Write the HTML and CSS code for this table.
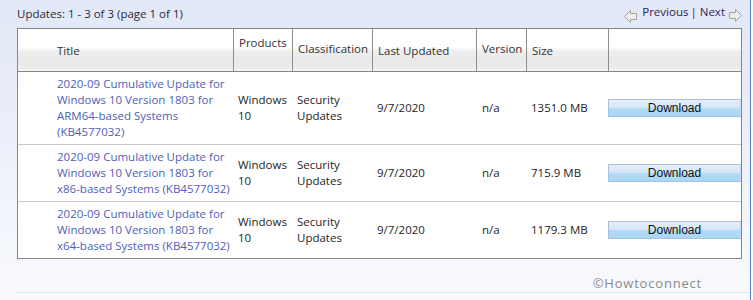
FILE: index.html
```html
<!DOCTYPE html>
<html lang="en">
<head>
    <meta charset="UTF-8">
    <meta name="viewport" content="width=device-width, initial-scale=1.0">
    <title>Microsoft Update Catalog - Search results</title>
    <link rel="stylesheet" href="styles.css">
</head>
<body>
    <div class="window">
        <div class="toolbar">
            <span class="count">Updates: 1 - 3 of 3 (page 1 of 1)</span>
            <div class="pager">
                <svg class="arrow" width="13" height="13" viewBox="0 0 13 13">
                    <polygon points="0.5,6.5 6.5,0.5 6.5,3.5 12.5,3.5 12.5,9.5 6.5,9.5 6.5,12.5" fill="#ececec" stroke="#a3a3a3"/>
                </svg>
                <a class="pager-link" href="#">Previous</a>
                <span class="sep">|</span>
                <a class="pager-link" href="#">Next</a>
                <svg class="arrow arrow-next" width="13" height="13" viewBox="0 0 13 13">
                    <polygon points="12.5,6.5 6.5,0.5 6.5,3.5 0.5,3.5 0.5,9.5 6.5,9.5 6.5,12.5" fill="#ececec" stroke="#a3a3a3"/>
                </svg>
            </div>
        </div>

        <table class="results">
            <thead>
                <tr>
                    <th class="col-title">Title</th>
                    <th class="col-products">Products</th>
                    <th class="col-class">Classification</th>
                    <th class="col-date">Last Updated</th>
                    <th class="col-version">Version</th>
                    <th class="col-size">Size</th>
                    <th class="col-action"></th>
                </tr>
            </thead>
            <tbody>
                <tr>
                    <td class="col-title"><a href="#">2020-09 Cumulative Update for Windows 10 Version 1803 for ARM64-based Systems (KB4577032)</a></td>
                    <td>Windows 10</td>
                    <td>Security Updates</td>
                    <td>9/7/2020</td>
                    <td class="col-version">n/a</td>
                    <td>1351.0 MB</td>
                    <td class="col-action"><button type="button">Download</button></td>
                </tr>
                <tr>
                    <td class="col-title"><a href="#">2020-09 Cumulative Update for Windows 10 Version 1803 for x86-based Systems (KB4577032)</a></td>
                    <td>Windows 10</td>
                    <td>Security Updates</td>
                    <td>9/7/2020</td>
                    <td class="col-version">n/a</td>
                    <td>715.9 MB</td>
                    <td class="col-action"><button type="button">Download</button></td>
                </tr>
                <tr>
                    <td class="col-title"><a href="#">2020-09 Cumulative Update for Windows 10 Version 1803 for x64-based Systems (KB4577032)</a></td>
                    <td>Windows 10</td>
                    <td>Security Updates</td>
                    <td>9/7/2020</td>
                    <td class="col-version">n/a</td>
                    <td>1179.3 MB</td>
                    <td class="col-action"><button type="button">Download</button></td>
                </tr>
            </tbody>
        </table>

        <div class="footer">
            <span class="watermark">©Howtoconnect</span>
        </div>
    </div>
</body>
</html>
```

FILE: styles.css
```css
/* Global Styles */
* {
    margin: 0;
    padding: 0;
    box-sizing: border-box;
}

body {
    font-family: 'Segoe UI', 'Open Sans', sans-serif;
    font-size: 11.5px;
    line-height: 16px;
    color: #1e1e1e;
    background: #fbfcfe;
    overflow: hidden;
}

/* Window frame */
.window {
    width: 751px;
    height: 300px;
    padding-left: 17px;
    border-right: 1px solid #5682c2;
    background: linear-gradient(to bottom, #e2e8f6 0, #eaeef9 120px, #f6f8fd 260px, #f7f9fd 100%);
}

/* Top bar */
.toolbar {
    width: 725px;
    height: 28px;
    display: flex;
    justify-content: space-between;
}

.count {
    padding-top: 6px;
    color: #2a2a3a;
}

.pager {
    display: flex;
    align-items: flex-start;
    padding-top: 4px;
}

.pager-link {
    color: #2f1f5e;
    text-decoration: none;
}

.sep {
    color: #2f1f5e;
    margin: 0 3px 0 2px;
}

.arrow {
    margin: 6px 5px 0 0;
}

.arrow-next {
    margin: 5px 0 0 4px;
}

/* Results table */
.results {
    width: 725px;
    table-layout: fixed;
    border-collapse: separate;
    border-spacing: 0;
    border: 1px solid #858585;
    background: #fff;
}

.results th {
    height: 43px;
    padding: 14px 0 0 5px;
    font-weight: normal;
    text-align: left;
    vertical-align: top;
    color: #333;
    border-left: 1px solid #8e8e8e;
    border-bottom: 1px solid #868686;
    background: linear-gradient(to bottom, #fff 0, #fff 18px, #efefef 22px, #e8e8e8 32px, #ececec 39px, #f6f6f6 42px);
}

.results th.col-title {
    width: 215px;
    padding-left: 39px;
    border-left: none;
}

.results th.col-products {
    width: 59px;
    padding-top: 6px;
}

.results th.col-class {
    width: 80px;
    padding-top: 12px;
}

.results th.col-date {
    width: 104px;
}

.results th.col-version {
    width: 50px;
    padding-top: 12px;
}

.results th.col-size {
    width: 82px;
}

.results th.col-action {
    width: 133px;
}

.results td {
    padding: 4px 0 4px 5px;
    vertical-align: middle;
    border-top: 1px solid #cbcbcb;
}

.results tbody tr:first-child td {
    border-top: none;
}

.results td.col-title {
    padding-left: 39px;
    padding-right: 0;
}

.results td.col-title a {
    color: #5060b8;
    text-decoration: none;
}

.results td.col-version {
    padding-left: 6px;
}

.results td.col-action {
    padding: 0;
}

/* Download button */
button {
    display: block;
    width: 133px;
    height: 18px;
    font-family: 'Liberation Sans', Arial, sans-serif;
    font-size: 12px;
    color: #111;
    border: 1px solid #a9c0dc;
    border-right-color: #c9d8ea;
    background: linear-gradient(to bottom, #e6eef9 0, #d6e6f6 45%, #b0daf6 55%, #a9d7f5 100%);
    cursor: pointer;
}

/* Footer */
.footer {
    width: 733px;
    height: 34px;
    padding-top: 16px;
    padding-right: 48px;
    text-align: right;
    border-bottom: 1px solid #dfe5f0;
}

.watermark {
    font-size: 13px;
    letter-spacing: 0.8px;
    color: #8a8a8a;
}
```
